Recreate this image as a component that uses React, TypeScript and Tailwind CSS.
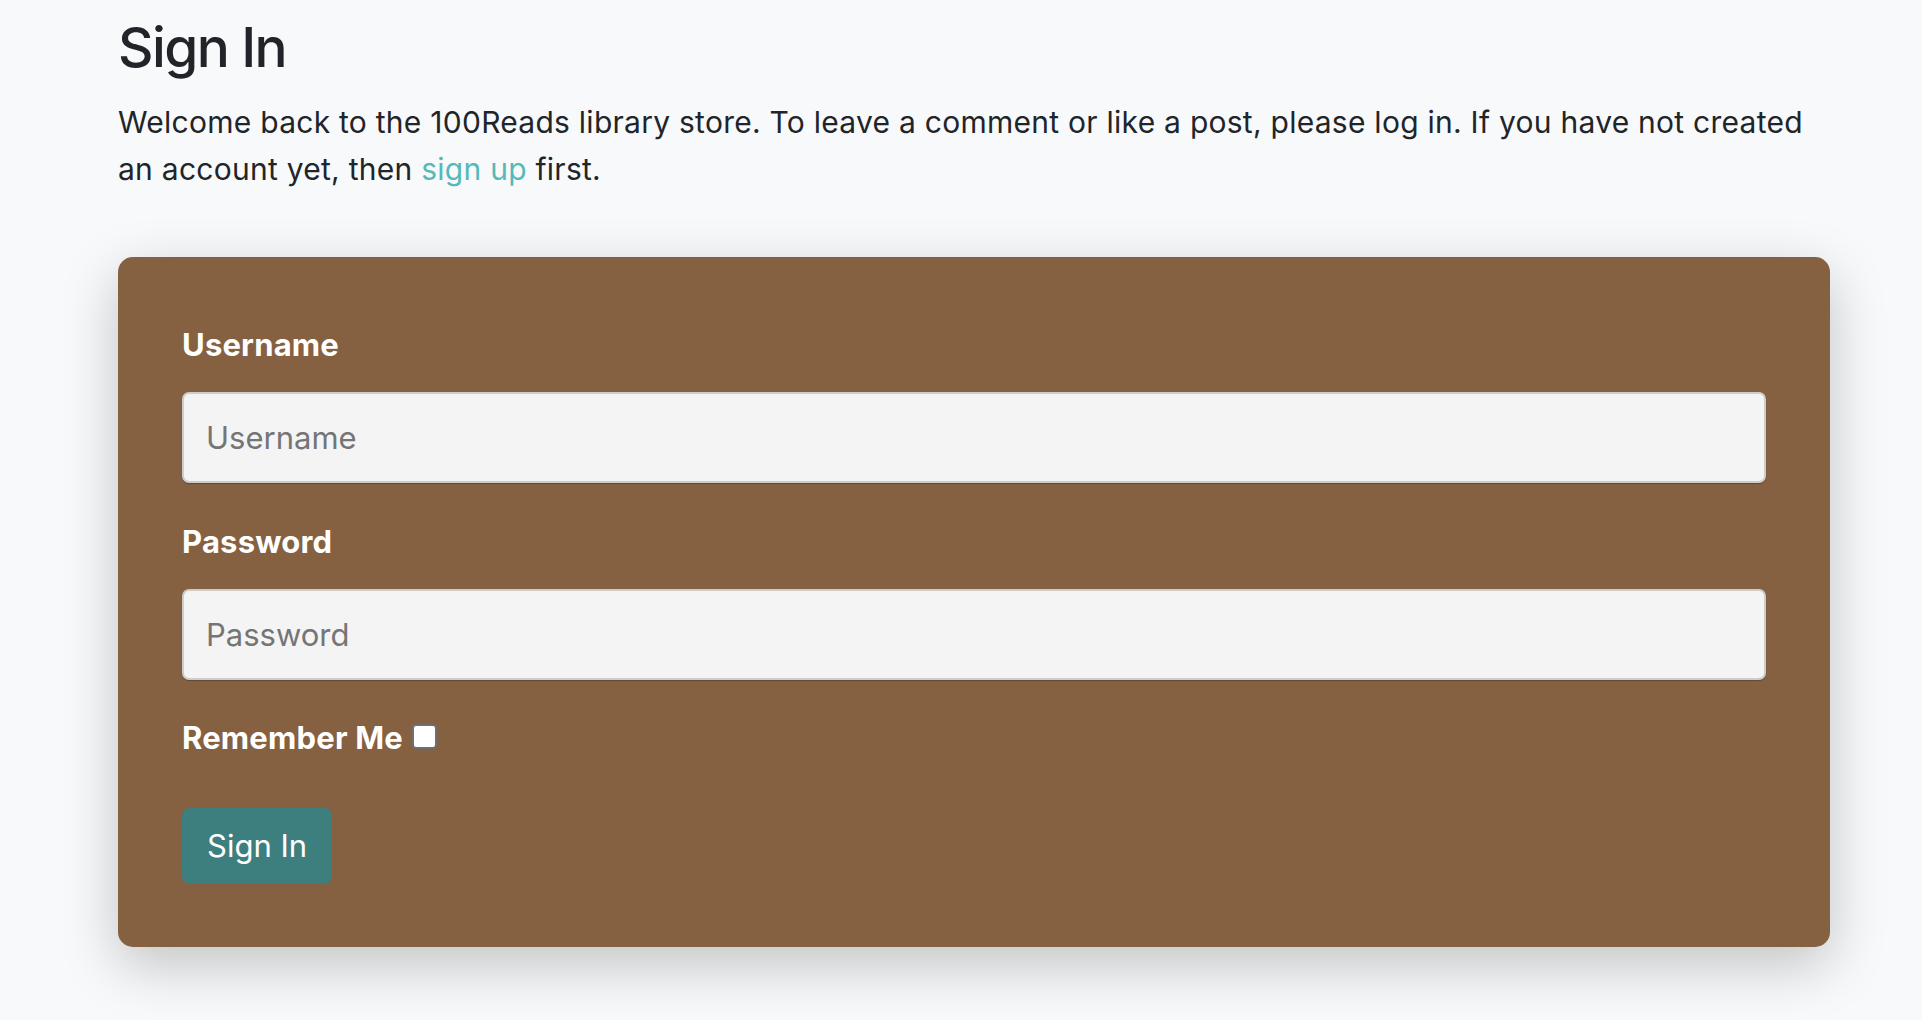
import { useState } from "react";

export default function App() {
  const [remember, setRemember] = useState(false);

  return (
    <div className="min-h-[1020px] bg-[#f8f9fa] text-[#212529] font-['Inter','Liberation_Sans',sans-serif]">
      <div className="ml-[118px] w-[1712px] pt-[14px]">
        <h1 className="text-[55px] leading-[67px] font-medium tracking-[-1.6px]">Sign In</h1>
        <p className="mt-[18px] w-[1690px] text-[30px] leading-[47px] tracking-[0.26px]">
          Welcome back to the 100Reads library store. To leave a comment or like a post, please log in. If you have
          not created an account yet, then{" "}
          <a href="#" className="text-[#56b9b9]">
            sign up
          </a>{" "}
          first.
        </p>

        <div className="mt-[64px] rounded-[15px] bg-[#856041] px-[64px] pt-[65px] pb-[63px] shadow-[0_18px_56px_rgba(0,0,0,0.22)]">
          <form onSubmit={(e) => e.preventDefault()}>
            <label htmlFor="username" className="block text-[31px] leading-[46px] font-bold tracking-[0.2px] text-white">
              Username
            </label>
            <input
              id="username"
              type="text"
              placeholder="Username"
              className="mt-[24px] block h-[91px] w-full rounded-[7px] border-2 border-[#cdcdcd] bg-[#f4f4f4] px-[22px] text-[31px] text-[#212529] placeholder:text-[#757575] shadow-[0_1px_1px_rgba(0,0,0,0.25)] outline-none"
            />

            <label htmlFor="password" className="mt-[36px] block text-[31px] leading-[46px] font-bold tracking-[0.2px] text-white">
              Password
            </label>
            <input
              id="password"
              type="password"
              placeholder="Password"
              className="mt-[24px] block h-[91px] w-full rounded-[7px] border-2 border-[#cdcdcd] bg-[#f4f4f4] px-[22px] text-[31px] text-[#212529] placeholder:text-[#757575] shadow-[0_1px_1px_rgba(0,0,0,0.25)] outline-none"
            />

            <div className="mt-[35px] flex items-center gap-[9px]">
              <label htmlFor="remember" className="text-[31px] leading-[46px] font-bold tracking-[0.2px] text-white">
                Remember Me
              </label>
              <input
                id="remember"
                type="checkbox"
                checked={remember}
                onChange={(e) => setRemember(e.target.checked)}
                className="mb-[3px] h-[25px] w-[25px] appearance-none rounded-[4px] border-2 border-[#6f6f6f] bg-white checked:bg-[#3d7e7f]"
              />
            </div>

            <button
              type="submit"
              className="mt-[47px] h-[76px] rounded-[8px] bg-[#3d7e7f] px-[25px] text-[31px] text-white"
            >
              Sign In
            </button>
          </form>
        </div>
      </div>
    </div>
  );
}
